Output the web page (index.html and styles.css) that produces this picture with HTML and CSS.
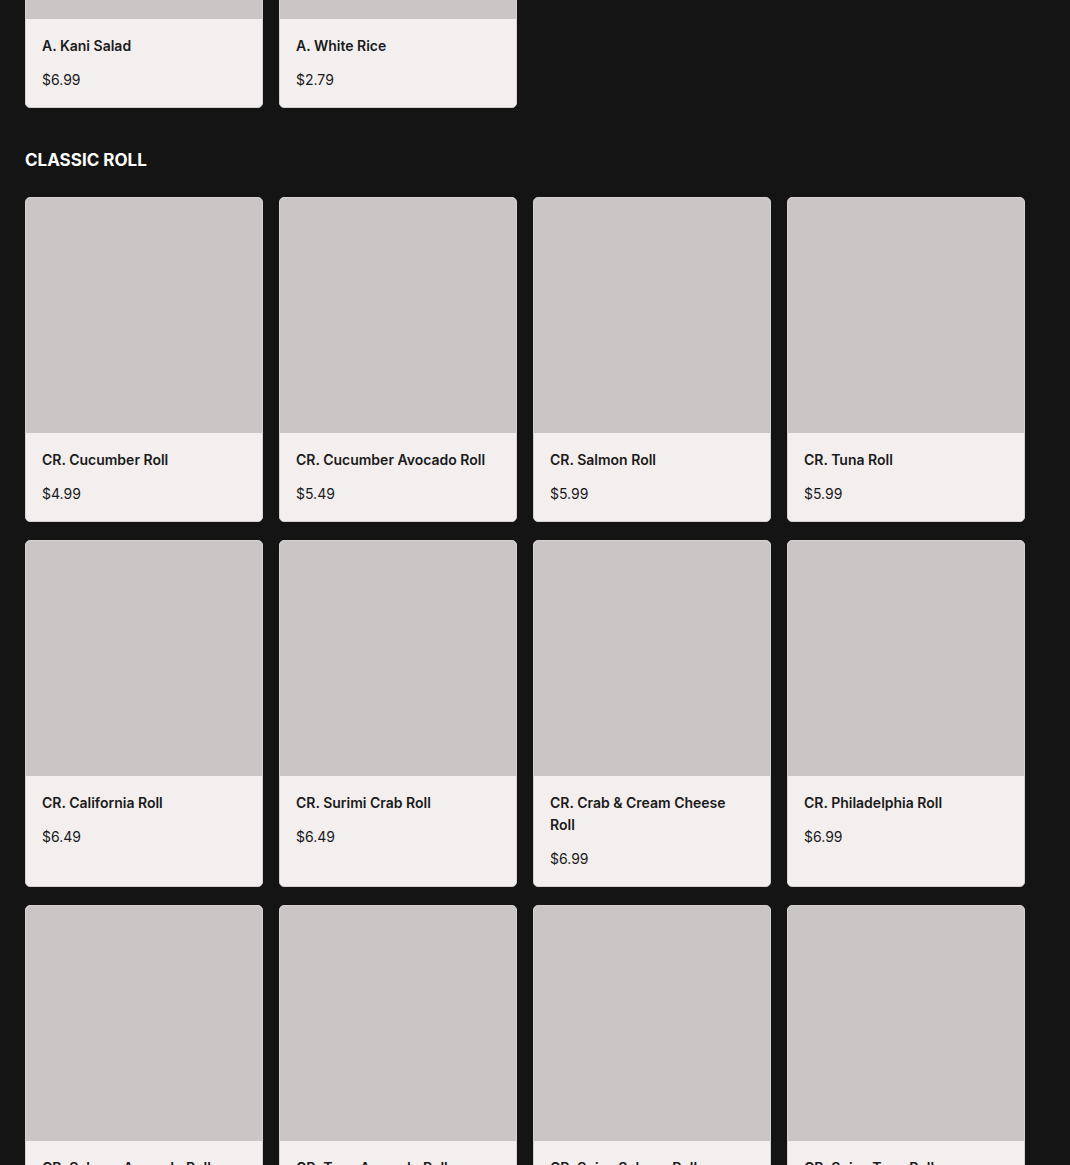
FILE: index.html
```html
<!DOCTYPE html>
<html lang="en">
<head>
<meta charset="UTF-8">
<meta name="viewport" content="width=device-width, initial-scale=1.0">
<title>Menu</title>
<link rel="stylesheet" href="styles.css">
</head>
<body>
<main class="menu">
  <section class="category category-scrolled">
    <div class="item-grid">
      <div class="item-card">
        <div class="item-image"></div>
        <div class="item-body">
          <h3 class="item-name">A. Kani Salad</h3>
          <p class="item-price">$6.99</p>
        </div>
      </div>
      <div class="item-card">
        <div class="item-image"></div>
        <div class="item-body">
          <h3 class="item-name">A. White Rice</h3>
          <p class="item-price">$2.79</p>
        </div>
      </div>
    </div>
  </section>

  <section class="category">
    <h2 class="category-title">CLASSIC ROLL</h2>
    <div class="item-grid">
      <div class="item-card">
        <div class="item-image"></div>
        <div class="item-body">
          <h3 class="item-name">CR. Cucumber Roll</h3>
          <p class="item-price">$4.99</p>
        </div>
      </div>
      <div class="item-card">
        <div class="item-image"></div>
        <div class="item-body">
          <h3 class="item-name">CR. Cucumber Avocado Roll</h3>
          <p class="item-price">$5.49</p>
        </div>
      </div>
      <div class="item-card">
        <div class="item-image"></div>
        <div class="item-body">
          <h3 class="item-name">CR. Salmon Roll</h3>
          <p class="item-price">$5.99</p>
        </div>
      </div>
      <div class="item-card">
        <div class="item-image"></div>
        <div class="item-body">
          <h3 class="item-name">CR. Tuna Roll</h3>
          <p class="item-price">$5.99</p>
        </div>
      </div>
      <div class="item-card">
        <div class="item-image"></div>
        <div class="item-body">
          <h3 class="item-name">CR. California Roll</h3>
          <p class="item-price">$6.49</p>
        </div>
      </div>
      <div class="item-card">
        <div class="item-image"></div>
        <div class="item-body">
          <h3 class="item-name">CR. Surimi Crab Roll</h3>
          <p class="item-price">$6.49</p>
        </div>
      </div>
      <div class="item-card">
        <div class="item-image"></div>
        <div class="item-body">
          <h3 class="item-name">CR. Crab &amp; Cream Cheese Roll</h3>
          <p class="item-price">$6.99</p>
        </div>
      </div>
      <div class="item-card">
        <div class="item-image"></div>
        <div class="item-body">
          <h3 class="item-name">CR. Philadelphia Roll</h3>
          <p class="item-price">$6.99</p>
        </div>
      </div>
      <div class="item-card">
        <div class="item-image"></div>
        <div class="item-body">
          <h3 class="item-name">CR. Salmon Avocado Roll</h3>
          <p class="item-price">$6.99</p>
        </div>
      </div>
      <div class="item-card">
        <div class="item-image"></div>
        <div class="item-body">
          <h3 class="item-name">CR. Tuna Avocado Roll</h3>
          <p class="item-price">$6.99</p>
        </div>
      </div>
      <div class="item-card">
        <div class="item-image"></div>
        <div class="item-body">
          <h3 class="item-name">CR. Spicy Salmon Roll</h3>
          <p class="item-price">$6.99</p>
        </div>
      </div>
      <div class="item-card">
        <div class="item-image"></div>
        <div class="item-body">
          <h3 class="item-name">CR. Spicy Tuna Roll</h3>
          <p class="item-price">$6.99</p>
        </div>
      </div>
    </div>
  </section>
</main>
</body>
</html>
```

FILE: styles.css
```css
/* Menu page */
body {
  margin: 0;
  background-color: #141414;
  font-family: Inter, "Noto Sans", Arial, sans-serif;
  color: #1a1a1a;
}

.menu {
  padding: 0 25px;
}

/* page is shown scrolled part way down */
.category-scrolled {
  margin-top: -217px;
}

.category {
  margin-bottom: 41px;
}

.category-title {
  margin: 0 0 26px;
  font-size: 17px;
  line-height: 22px;
  font-weight: 700;
  color: #ffffff;
}

.item-grid {
  display: grid;
  grid-template-columns: repeat(4, 238px);
  column-gap: 16px;
  row-gap: 18px;
}

.item-card {
  display: flex;
  flex-direction: column;
  background-color: #f3efef;
  border: 1px solid #d6d1d1;
  border-radius: 5px;
  overflow: hidden;
}

.item-image {
  height: 235px;
  background-color: #c9c6c5;
}

.item-body {
  padding: 16px 20px 16px 16px;
}

.item-name {
  margin: 0 0 12px;
  font-size: 14px;
  line-height: 22px;
  font-weight: 600;
}

.item-price {
  margin: 0;
  font-size: 14px;
  line-height: 22px;
}
```
